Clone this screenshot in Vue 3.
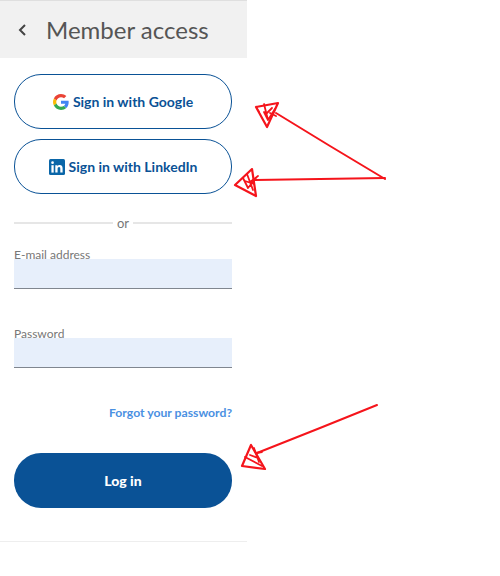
<script setup>
const arrows = [
  {
    line: 'M385 179 L330 146 L276 113',
    head: 'M256 107 L278 103 L267 127 Z M256 107 L259 112',
    marks: 'M264 104 L268 120 L275 109 M268 120 L264 112 M270 113 L276 116 M266 114 L272 108'
  },
  {
    line: 'M385 178 L320 179 L255 180',
    head: 'M252 169 L235 185 L256 196 Z',
    marks: 'M247 174 L253 190 M243 178 L248 188 L256 178 M250 182 L258 176 M245 181 L254 184'
  },
  {
    line: 'M377 405 L320 428 L257 453',
    head: 'M251 445 L242 466 L265 469 Z',
    marks: 'M245 457 L262 466 M254 448 L259 462 L256 453 L262 452 M250 455 L258 458'
  }
]
</script>

<template>
  <div class="page">
    <div class="panel">
      <header class="top">
        <svg class="back" width="10" height="14" viewBox="0 0 10 14">
          <path d="M8 2 L3 7 L8 12" fill="none" stroke="#444" stroke-width="2" />
        </svg>
        <h1>Member access</h1>
      </header>

      <div class="body">
        <button class="social google" type="button">
          <svg width="16" height="16" viewBox="0 0 48 48">
            <path fill="#EA4335" d="M24 9.5c3.5 0 6.700 1.200 9.200 3.600l6.900-6.900C35.900 2.400 30.500 0 24 0 14.600 0 6.500 5.400 2.600 13.200l8 6.200C12.500 13.700 17.800 9.500 24 9.500z" />
            <path fill="#4285F4" d="M47 24.500c0-1.600-.1-3.100-.4-4.500H24v9h12.900c-.6 3-2.200 5.500-4.700 7.200l7.700 6c4.500-4.200 7.100-10.300 7.100-17.700z" />
            <path fill="#FBBC05" d="M10.600 28.600c-.5-1.500-.8-3-.8-4.600s.3-3.100.8-4.600l-8-6.200C.9 16.500 0 20.100 0 24s.9 7.500 2.600 10.800l8-6.200z" />
            <path fill="#34A853" d="M24 48c6.500 0 11.900-2.100 15.900-5.800l-7.700-6c-2.200 1.400-4.900 2.300-8.200 2.300-6.200 0-11.500-4.200-13.400-9.900l-8 6.200C6.500 42.600 14.600 48 24 48z" />
          </svg>
          <span>Sign in with Google</span>
        </button>

        <button class="social linkedin" type="button">
          <svg width="16" height="16" viewBox="0 0 16 16">
            <rect width="16" height="16" rx="1.500" fill="#0A66A8" />
            <rect x="2.400" y="6.200" width="2.300" height="7.400" fill="#fff" />
            <circle cx="3.550" cy="3.700" r="1.350" fill="#fff" />
            <path fill="#fff" d="M6.300 6.200h2.200v1c.4-.7 1.200-1.200 2.300-1.200 2.100 0 2.800 1.300 2.800 3.400v4.200h-2.300V9.900c0-1-.2-1.800-1.200-1.800s-1.500.8-1.500 1.800v3.700H6.300z" />
          </svg>
          <span>Sign in with LinkedIn</span>
        </button>

        <div class="divider"><span>or</span></div>

        <div class="field first">
          <label>E-mail address</label>
          <div class="input"></div>
        </div>

        <div class="field second">
          <label>Password</label>
          <div class="input"></div>
        </div>

        <a class="forgot" href="#">Forgot your password?</a>

        <button class="login" type="button">Log in</button>
      </div>

      <div class="rule"></div>
    </div>

    <svg class="marks" width="500" height="576" viewBox="0 0 500 576">
      <g v-for="(a, i) in arrows" :key="i" fill="none" stroke="#f5141b" stroke-linejoin="round" stroke-linecap="round">
        <path :d="a.line" stroke-width="2" />
        <path :d="a.head" stroke-width="2.200" />
        <path :d="a.marks" stroke-width="1.800" />
      </g>
    </svg>
  </div>
</template>

<style scoped>
.page {
  position: relative;
  width: 500px;
  height: 576px;
  background: #fff;
  font-family: Lato, "Liberation Sans", sans-serif;
  overflow: hidden;
}

.panel {
  width: 247px;
}

.top {
  display: flex;
  align-items: center;
  height: 57px;
  padding-left: 17px;
  background: #f1f1f1;
  border-top: 1px solid #dfdfdf;
}

.back {
  margin-right: 19px;
}

.top h1 {
  margin: 0;
  font-size: 24px;
  font-weight: 400;
  color: #555;
}

.body {
  display: flex;
  flex-direction: column;
  padding: 16px 15px 0 14px;
}

button {
  font-family: inherit;
  cursor: pointer;
}

.social {
  display: flex;
  align-items: center;
  justify-content: center;
  gap: 4px;
  width: 218px;
  height: 55px;
  padding: 0;
  background: #fff;
  border: 1px solid #0a5296;
  border-radius: 27px;
  color: #0a5296;
  font-size: 14px;
  font-weight: 700;
}

.google {
  margin-bottom: 10px;
}

.divider {
  display: flex;
  align-items: center;
  gap: 4px;
  margin-top: 21px;
  font-size: 13px;
  line-height: 16px;
  color: #777;
}

.divider::before,
.divider::after {
  content: "";
  flex: 1;
  height: 2px;
  background: #e6e6e6;
}

.field {
  display: flex;
  flex-direction: column;
}

.field.first {
  margin-top: 15px;
}

.field.second {
  margin-top: 36px;
}

.field label {
  height: 13px;
  font-size: 12px;
  line-height: 18px;
  color: #777;
  position: relative;
  z-index: 1;
}

.input {
  height: 29px;
  background: #e7effb;
  border-bottom: 1px solid #80868f;
}

.forgot {
  align-self: flex-end;
  margin-top: 38px;
  font-size: 12.200px;
  font-weight: 700;
  line-height: 14px;
  color: #4a90e2;
  text-decoration: none;
}

.login {
  width: 218px;
  height: 55px;
  margin-top: 33px;
  padding: 0;
  border: 0;
  border-radius: 27px;
  background: #0a5296;
  color: #fff;
  font-size: 14px;
  font-weight: 900;
}

.rule {
  height: 1px;
  margin-top: 33px;
  background: #eeeeee;
}

.marks {
  position: absolute;
  top: 0;
  left: 0;
  pointer-events: none;
}
</style>
